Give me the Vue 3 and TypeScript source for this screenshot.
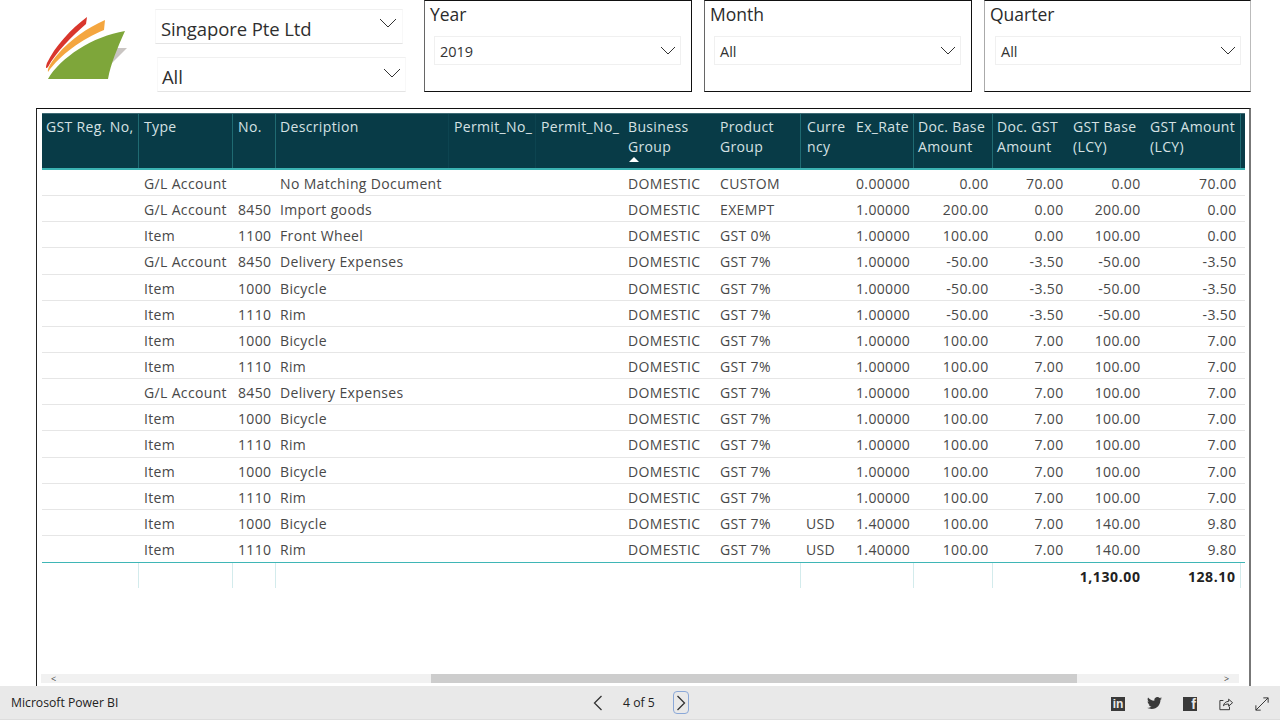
<script setup lang="ts">
interface Row { type: string; no: string; desc: string; pg: string; cur: string; rate: string; base: string; gst: string; lbase: string; lamt: string }
const headers: { label: string; sep?: boolean; sort?: boolean; faint?: boolean; cls?: string }[] = [
  { label: 'GST Reg. No,', sep: true, cls: 'nw first' },
  { label: 'Type', sep: true },
  { label: 'No.', sep: true },
  { label: 'Description', faint: true, cls: 'near' },
  { label: 'Permit_No_', faint: true, cls: 'nw' },
  { label: 'Permit_No_', cls: 'nw' },
  { label: 'Business Group', sort: true },
  { label: 'Product Group', sep: true },
  { label: 'Curre ncy', cls: 'tight' },
  { label: 'Ex_Rate', sep: true, cls: 'nw' },
  { label: 'Doc. Base Amount', sep: true, cls: 'near' },
  { label: 'Doc. GST Amount', cls: 'near' },
  { label: 'GST Base (LCY)' },
  { label: 'GST Amount (LCY)', sep: true },
]
const m = (type: string, no: string, desc: string, pg: string, cur: string, rate: string, base: string, gst: string, lbase: string, lamt: string): Row =>
  ({ type, no, desc, pg, cur, rate, base, gst, lbase, lamt })
const rows: Row[] = [
  m('G/L Account', '', 'No Matching Document', 'CUSTOM', '', '0.00000', '0.00', '70.00', '0.00', '70.00'),
  m('G/L Account', '8450', 'Import goods', 'EXEMPT', '', '1.00000', '200.00', '0.00', '200.00', '0.00'),
  m('Item', '1100', 'Front Wheel', 'GST 0%', '', '1.00000', '100.00', '0.00', '100.00', '0.00'),
  m('G/L Account', '8450', 'Delivery Expenses', 'GST 7%', '', '1.00000', '-50.00', '-3.50', '-50.00', '-3.50'),
  m('Item', '1000', 'Bicycle', 'GST 7%', '', '1.00000', '-50.00', '-3.50', '-50.00', '-3.50'),
  m('Item', '1110', 'Rim', 'GST 7%', '', '1.00000', '-50.00', '-3.50', '-50.00', '-3.50'),
  m('Item', '1000', 'Bicycle', 'GST 7%', '', '1.00000', '100.00', '7.00', '100.00', '7.00'),
  m('Item', '1110', 'Rim', 'GST 7%', '', '1.00000', '100.00', '7.00', '100.00', '7.00'),
  m('G/L Account', '8450', 'Delivery Expenses', 'GST 7%', '', '1.00000', '100.00', '7.00', '100.00', '7.00'),
  m('Item', '1000', 'Bicycle', 'GST 7%', '', '1.00000', '100.00', '7.00', '100.00', '7.00'),
  m('Item', '1110', 'Rim', 'GST 7%', '', '1.00000', '100.00', '7.00', '100.00', '7.00'),
  m('Item', '1000', 'Bicycle', 'GST 7%', '', '1.00000', '100.00', '7.00', '100.00', '7.00'),
  m('Item', '1110', 'Rim', 'GST 7%', '', '1.00000', '100.00', '7.00', '100.00', '7.00'),
  m('Item', '1000', 'Bicycle', 'GST 7%', 'USD', '1.40000', '100.00', '7.00', '140.00', '9.80'),
  m('Item', '1110', 'Rim', 'GST 7%', 'USD', '1.40000', '100.00', '7.00', '140.00', '9.80'),
]
const totalSeps = [true, true, true, false, false, false, false, true, false, true, true, false, false, true]
const filters = [
  { title: 'Year', value: '2019', cls: 'f-year' },
  { title: 'Month', value: 'All', cls: 'f-month' },
  { title: 'Quarter', value: 'All', cls: 'f-quarter' },
]
</script>

<template>
  <div class="page">
    <header class="top">
      <svg class="logo" viewBox="0 0 82 62" width="82" height="62" aria-hidden="true">
        <path d="M70 31H82L65 48Z" fill="#c9c5c2" />
        <path d="M42 0L41 7C27 19 11 35 3 50C0 53 1 49 2 46C10 29 26 12 42 0Z" fill="#d9362c" />
        <path d="M60 3L59 13C37 22 15 38 3 55C2 51 7 44 13 37C25 23 42 11 60 3Z" fill="#f4a63f" />
        <path d="M80 14C72 32 66 46 63 62H3C15 41 48 19 80 14Z" fill="#7ea63a" />
      </svg>
      <div class="side">
        <div class="big s1"><span>Singapore Pte Ltd</span>
          <svg class="chev" viewBox="0 0 18 10" width="18" height="10"><path d="M1 1L9 9L17 1" /></svg>
        </div>
        <div class="big s2"><span>All</span>
          <svg class="chev" viewBox="0 0 18 10" width="18" height="10"><path d="M1 1L9 9L17 1" /></svg>
        </div>
      </div>
      <div v-for="f in filters" :key="f.title" class="filter" :class="f.cls">
        <div class="f-title">{{ f.title }}</div>
        <div class="f-drop"><span>{{ f.value }}</span>
          <svg class="chev small" viewBox="0 0 16 9" width="16" height="9"><path d="M1 1L8 8L15 1" /></svg>
        </div>
      </div>
    </header>

    <section class="frame">
      <div class="table">
        <div class="grid head">
          <div v-for="(h, i) in headers" :key="i" class="hc" :class="[h.cls, { sep: h.sep, faint: h.faint }]">
            <span>{{ h.label }}</span>
            <svg v-if="h.sort" class="sort" viewBox="0 0 10 5" width="10" height="5"><path d="M0 5L5 0L10 5Z" /></svg>
          </div>
          <div></div>
        </div>
        <div v-for="(r, i) in rows" :key="i" class="grid row">
          <div></div>
          <div class="c">{{ r.type }}</div>
          <div class="c r no">{{ r.no }}</div>
          <div class="c nw desc">{{ r.desc }}</div>
          <div></div>
          <div></div>
          <div class="c">DOMESTIC</div>
          <div class="c">{{ r.pg }}</div>
          <div class="c">{{ r.cur }}</div>
          <div class="c r">{{ r.rate }}</div>
          <div class="c r">{{ r.base }}</div>
          <div class="c r">{{ r.gst }}</div>
          <div class="c r">{{ r.lbase }}</div>
          <div class="c r">{{ r.lamt }}</div>
          <div></div>
        </div>
        <div class="grid total">
          <div v-for="(s, i) in totalSeps" :key="i" class="tc" :class="{ sep: s }">
            <b v-if="i === 12">1,130.00</b>
            <b v-if="i === 13">128.10</b>
          </div>
          <div></div>
        </div>
      </div>
      <div class="scroll">
        <span class="arrow">&lt;</span>
        <div class="track"><div class="thumb"></div></div>
        <span class="arrow">&gt;</span>
      </div>
    </section>

    <footer class="foot">
      <div class="brand">Microsoft Power BI</div>
      <nav class="pager">
        <svg viewBox="0 0 10 16" width="10" height="16" class="line"><path d="M8.5 1L1.5 8L8.5 15" /></svg>
        <span class="pg">4 of 5</span>
        <span class="focus">
          <svg viewBox="0 0 10 16" width="10" height="16" class="line"><path d="M1.5 1L8.5 8L1.5 15" /></svg>
        </span>
      </nav>
      <div class="social">
        <span class="sq in">in</span>
        <svg viewBox="0 0 24 20" width="15" height="12.500" class="solid tw"><path d="M24 2.4c-.9.4-1.8.7-2.8.8 1-.6 1.8-1.6 2.2-2.7-1 .6-2 1-3.1 1.2C19.3.7 18 0 16.6 0c-2.7 0-4.9 2.200-4.900 4.900 0 .4 0 .8.100 1.100C7.700 5.800 4.100 3.900 1.700.9c-.4.700-.7 1.600-.7 2.500 0 1.700.9 3.200 2.200 4.100-.8 0-1.600-.2-2.200-.6v.1c0 2.400 1.700 4.400 3.900 4.800-.4.100-.8.200-1.300.2-.3 0-.6 0-.9-.1.600 2 2.400 3.400 4.600 3.400-1.700 1.300-3.800 2.100-6.100 2.100-.4 0-.8 0-1.200-.1C2.200 18.300 4.800 19.100 7.500 19.100c9.100 0 14-7.500 14-14v-.6c1-.7 1.800-1.500 2.500-2.100z" /></svg>
        <span class="sq fb">f</span>
        <svg viewBox="0 0 16 16" width="14" height="14" class="line thin"><path d="M5 10C5.500 7 8 5 11 5V2.500L15.500 6.500L11 10.500V8C8.500 8 6.500 8.500 5 10Z" /><path d="M5 4H1V14.500H12V11" /></svg>
        <svg viewBox="0 0 16 16" width="14" height="14" class="line thin"><path d="M1 15L15 1M9.500 1H15V6.500M1 9.500V15H6.500" /></svg>
      </div>
    </footer>
  </div>
</template>

<style>
html, body { margin: 0; background: #fff; }
</style>

<style scoped>
.page {
  width: 1280px;
  height: 720px;
  display: flex;
  flex-direction: column;
  overflow: hidden;
  font-family: "Open Sans", "Noto Sans", sans-serif;
  color: #333;
  background: #fff;
}
.top {
  height: 108px;
  flex: none;
  display: flex;
  align-items: flex-start;
}
.logo { margin: 17px 0 0 45px; flex: none; }
.side {
  width: 251px;
  margin-left: 28px;
  flex: none;
  display: flex;
  flex-direction: column;
}
.big {
  width: 248px;
  box-sizing: border-box;
  display: flex;
  align-items: center;
  justify-content: space-between;
  font-size: 18.500px;
  color: #2f2f2f;
  border: 1px solid #f0f0f0;
  border-bottom-color: #e4e4e4;
  border-left-color: #f8f8f8;
  border-right-color: #f8f8f8;
}
.big span { letter-spacing: -0.1px; }
.s1 { height: 35px; margin-top: 9px; padding: 3px 5px 0 5px; }
.s2 { height: 35px; margin-top: 13px; margin-left: 2px; width: 249px; padding: 3px 4px 0 4px; }
.s1 .chev { margin-bottom: 10px; }
.chev { fill: none; stroke: #333; stroke-width: 1; flex: none; margin-bottom: 6px; }
.filter {
  width: 268px;
  height: 92px;
  box-sizing: border-box;
  border: 1px solid #111;
  border-left-color: #666;
  flex: none;
  padding: 0 10px 0 9px;
}
.f-year { margin-left: 18px; }
.f-month { margin-left: 12px; }
.f-quarter { margin-left: 12px; width: 267px; border-left-color: #aaa; border-right-color: #bbb; padding: 0 9px 0 10px; }
.f-title { font-size: 17.500px; line-height: 27px; margin-left: -4px; color: #2b2b2b; height: 35px; }
.f-quarter .f-title { margin-left: -5px; }
.f-drop {
  height: 29px;
  box-sizing: border-box;
  border: 1px solid #f0f0f0;
  display: flex;
  align-items: center;
  justify-content: space-between;
  padding: 2px 4px 0 5px;
  font-size: 14.500px;
  color: #333;
}
.chev.small { margin-bottom: 3px; }

.frame {
  width: 1215px;
  height: 578px;
  box-sizing: border-box;
  margin-left: 36px;
  flex: none;
  border-top: 1px solid #111;
  border-left: 1px solid #222;
  border-right: 2px solid #777;
  padding: 4px 4px 3px 5px;
  display: flex;
  flex-direction: column;
}
.table { flex: 1; min-height: 0; font-size: 14px; letter-spacing: 0.35px; }
.grid {
  display: grid;
  grid-template-columns: 97px 94px 43px 173px 87px 87px 92px 86px 50px 63px 79px 75px 77px 96px 4px;
}
.head {
  height: 57px;
  box-sizing: border-box;
  background: #083b47;
  border-top: 1px solid #3f6b75;
  border-bottom: 2px solid #3bb3b3;
  color: #d5e1e3;
  line-height: 20px;
}
.hc {
  padding: 3px 4px 0 5px;
  overflow: hidden;
  box-sizing: border-box;
}
.hc span { display: block; }
.hc.nw { white-space: nowrap; }
.hc.first { padding-left: 4px; }
.hc.near { padding-left: 4px; }
.hc.tight { padding-left: 6px; width: 44px; }
.hc.sep { border-right: 1px solid #1f6a72; }
.hc.faint { border-right: 1px solid #0d4450; }
.sort { display: block; margin: 0 0 0 1px; fill: #fff; }
.row {
  height: 26.150px;
  box-sizing: border-box;
  border-bottom: 1px solid #e6e6e6;
  align-items: center;
  color: #484848;
  line-height: 24px;
  padding-top: 2px;
}
.row:nth-last-child(2) { border-bottom: 0; }
.c { padding: 0 4px 0 5px; white-space: nowrap; }
.c.desc { padding-left: 4px; }
.c.r { text-align: right; padding-right: 4.500px; }
.c.r.no { padding-right: 6px; }
.total {
  height: 26px;
  border-top: 1px solid #3fb6b6;
  line-height: 27px;
  color: #222;
}
.tc { text-align: right; padding-right: 4.500px; white-space: nowrap; height: 25px; box-sizing: border-box; letter-spacing: 0.6px; }
.tc.sep { border-right: 1px solid #d3ebec; }
.scroll {
  height: 9px;
  flex: none;
  margin: 0 6px 0 -1px;
  background: #f1f1f1;
  display: flex;
  align-items: center;
}
.track { flex: 1; height: 9px; }
.thumb { width: 646px; height: 9px; margin-left: 365px; background: #cdcdcd; }
.arrow { width: 25px; text-align: center; font-size: 9px; line-height: 9px; color: #444; flex: none; }

.foot {
  flex: 1;
  background: #e9e9e9;
  display: flex;
  align-items: center;
  font-size: 12.200px;
  color: #222;
  border-bottom: 1px solid #ddd;
}
.brand { margin-left: 11px; width: 582px; flex: none; }
.pager { display: flex; align-items: center; flex: none; }
.line { fill: none; stroke: #333; stroke-width: 1.300; flex: none; }
.pg { margin: 0 18px 0 20px; }
.focus {
  width: 16px;
  height: 23px;
  box-sizing: border-box;
  border: 1.500px solid #8aa8d8;
  border-radius: 4px;
  display: flex;
  align-items: center;
  justify-content: center;
}
.social {
  display: flex;
  align-items: center;
  gap: 22px;
  margin-left: auto;
  margin-right: 11px;
  padding-top: 2px;
}
.sq {
  width: 14px;
  height: 14px;
  box-sizing: border-box;
  background: #3a3a3a;
  color: #e9e9e9;
  font-family: "Liberation Sans", sans-serif;
  font-weight: 700;
  display: flex;
  align-items: flex-end;
  justify-content: center;
  line-height: 13px;
}
.in { font-size: 12px; }
.fb { font-size: 14px; justify-content: flex-end; padding-right: 1px; line-height: 14px; }
.solid { fill: #3a3a3a; flex: none; }
.tw { margin-right: -1px; }
.thin { stroke-width: 1.100; }
</style>
